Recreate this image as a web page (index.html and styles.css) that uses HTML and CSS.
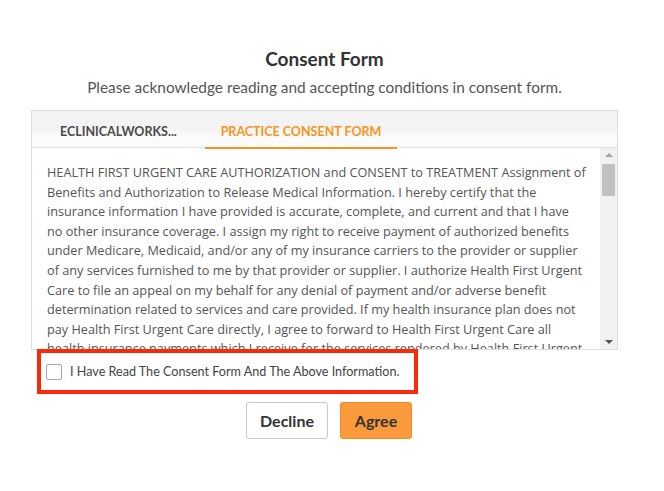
FILE: index.html
```html
<!DOCTYPE html>
<html>
<head>
<meta charset="utf-8">
<link rel="stylesheet" href="styles.css">
</head>
<body>
<div class="wrap">
  <h1 class="title">Consent Form</h1>
  <p class="subtitle">Please acknowledge reading and accepting conditions in consent form.</p>
  <div class="panel">
    <div class="tabs">
      <div class="tab">ECLINICALWORKS...</div>
      <div class="tab active">PRACTICE CONSENT FORM</div>
    </div>
    <div class="content">
      <div class="text">HEALTH FIRST URGENT CARE AUTHORIZATION and CONSENT to TREATMENT Assignment of Benefits and Authorization to Release Medical Information. I hereby certify that the insurance information I have provided is accurate, complete, and current and that I have no other insurance coverage. I assign my right to receive payment of authorized benefits under Medicare, Medicaid, and/or any of my insurance carriers to the provider or supplier of any services furnished to me by that provider or supplier. I authorize Health First Urgent Care to file an appeal on my behalf for any denial of payment and/or adverse benefit determination related to services and care provided. If my health insurance plan does not pay Health First Urgent Care directly, I agree to forward to Health First Urgent Care all health insurance payments which I receive for the services rendered by Health First Urgent Care to me.</div>
      <div class="scrollbar">
        <div class="arrow up"></div>
        <div class="track"><div class="thumb"></div></div>
        <div class="arrow down"></div>
      </div>
    </div>
  </div>
  <div class="agree-row">
    <span class="checkbox"></span>
    <span class="agree-label">I Have Read The Consent Form And The Above Information.</span>
  </div>
  <div class="buttons">
    <button class="btn decline">Decline</button>
    <button class="btn agree">Agree</button>
  </div>
</div>
</body>
</html>
```
FILE: styles.css
```css
html, body {
  margin: 0;
  padding: 0;
  background: #fff;
}
body {
  font-family: "Lato", "Open Sans", sans-serif;
  color: #444;
}
.wrap {
  width: 587px;
  margin-left: 31px;
  display: flex;
  flex-direction: column;
}
.title {
  margin: 47px 0 0;
  font-size: 19px;
  line-height: 24px;
  font-weight: 700;
  color: #333;
  text-align: center;
}
.subtitle {
  margin: 6px 0 0;
  font-size: 15.4px;
  line-height: 20px;
  color: #555;
  text-align: center;
}
.panel {
  margin-top: 13px;
  border: 1px solid #dedede;
}
.tabs {
  height: 36px;
  display: flex;
  background: linear-gradient(#f3f3f3 0%, #f3f3f3 50%, #fbfbfb 70%, #fbfbfb 100%);
  border-bottom: 1px solid #e2e2e2;
}
.tab {
  font-size: 12.5px;
  font-weight: 700;
  color: #4a4a4a;
  line-height: 16px;
  padding: 13px 0 0;
  box-sizing: border-box;
  white-space: nowrap;
}
.tab:first-child {
  margin-left: 12px;
  padding-left: 16px;
  width: 151px;
}
.tab.active {
  margin-left: 10px;
  color: #f7941d;
  border-bottom: 2px solid #f7941d;
  margin-bottom: -2px;
  width: 192px;
  text-align: center;
}
.content {
  display: flex;
  height: 201px;
  background: #fff;
}
.text {
  flex: 1;
  overflow: hidden;
  padding: 15px 13.5px 0 15px;
  font-family: "Open Sans", sans-serif;
  font-size: 12.7px;
  line-height: 19.6px;
  color: #555;
}
.scrollbar {
  width: 17px;
  background: #f1f1f1;
  display: flex;
  flex-direction: column;
  align-items: center;
}
.arrow {
  height: 14px;
  width: 17px;
  display: flex;
  align-items: center;
  justify-content: center;
}
.arrow::after {
  content: "";
  border-left: 4px solid transparent;
  border-right: 4px solid transparent;
}
.arrow.up::after {
  border-bottom: 4px solid #a3a3a3;
}
.arrow.down::after {
  border-top: 4px solid #505050;
}
.track {
  flex: 1;
  width: 17px;
  display: flex;
  justify-content: center;
}
.thumb {
  margin-top: 2px;
  width: 13px;
  height: 32px;
  background: #c1c1c1;
}
.agree-row {
  display: flex;
  align-items: center;
  width: 381px;
  height: 45px;
  box-sizing: border-box;
  margin-left: 6px;
  margin-top: -1px;
  border: 4px solid #fa2a08;
  padding-left: 5px;
}
.checkbox {
  flex: none;
  width: 14px;
  height: 14px;
  border: 1px solid #a8a8a8;
  border-radius: 2px;
  background: #fff;
}
.agree-label {
  margin-left: 8px;
  font-size: 12.6px;
  color: #444;
  white-space: nowrap;
}
.buttons {
  display: flex;
  justify-content: center;
  gap: 12px;
  margin-top: 8px;
  padding-left: 9px;
}
.btn {
  height: 37px;
  font-family: "Lato", sans-serif;
  font-weight: 700;
  font-size: 16px;
  color: #333;
  border-radius: 3px;
  cursor: pointer;
}
.decline {
  width: 82px;
  background: #fff;
  border: 1px solid #c8c8c8;
}
.agree {
  width: 72px;
  background: #f99a3c;
  border: 1px solid #f08a26;
}
```
